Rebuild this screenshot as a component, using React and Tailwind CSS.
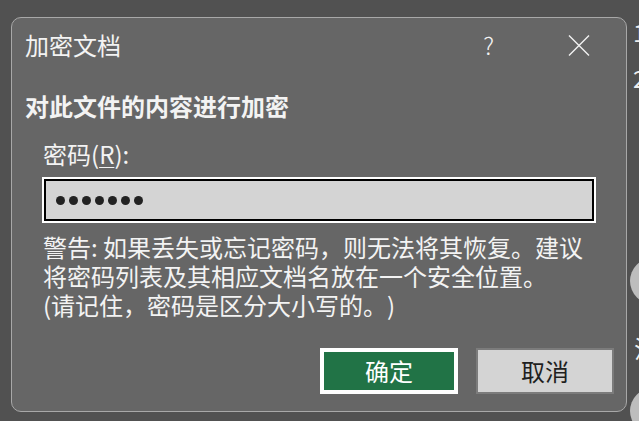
import React from "react";

const cjk = { fontFamily: '"Noto Sans CJK SC", "Noto Sans", sans-serif' };

function CloseIcon() {
  return (
    <svg width="22" height="21" viewBox="0 0 22 21" fill="none">
      <path d="M1 0.5 L21 20.5 M21 0.5 L1 20.5" stroke="#f2f2f2" strokeWidth="1.4" />
    </svg>
  );
}

export default function App() {
  return (
    <div className="relative w-[639px] h-[421px] overflow-hidden bg-[#515151]" style={cjk}>
      {/* glimpses of the window behind the dialog */}
      <div className="absolute left-[633px] top-[20px] text-[24px] leading-[24px] text-[#eeeeee]">1</div>
      <div className="absolute left-[633px] top-[66px] text-[24px] leading-[24px] text-[#eeeeee]">2</div>
      <div className="absolute left-[630px] top-[258px] w-[46px] h-[46px] rounded-full bg-[#bdbdbd]"></div>
      <div className="absolute left-[634px] top-[336px] text-[24px] leading-[24px] text-[#eeeeee]">注</div>
      <div className="absolute left-[630px] top-[388px] w-[46px] h-[46px] rounded-full bg-[#bdbdbd]"></div>

      <div className="pt-[17px] pl-[11px]">
        <div className="w-[616px] h-[395px] rounded-[10px] border border-[#a8a8a8] bg-[#666666] flex flex-col text-[#f3f3f3] [text-spacing-trim:space-all]">
          {/* title bar */}
          <div className="h-[54px] flex items-center pl-[13px]">
            <span className="text-[24px] leading-[32px]">加密文档</span>
            <span className="ml-auto text-[24px] leading-[32px] font-light mr-[74px]">?</span>
            <span className="mr-[36px] mt-[1px]">
              <CloseIcon />
            </span>
          </div>

          <div className="mt-[18px] pl-[13px] text-[24px] leading-[32px] font-bold">
            对此文件的内容进行加密
          </div>

          <div className="mt-[16px] pl-[31px] text-[24px] leading-[32px]">
            密码(<span className="underline underline-offset-[3px] decoration-1">R</span>):
          </div>

          <div className="mt-[7px] ml-[30px] w-[554px] h-[46px] border-2 border-white">
            <div className="h-full border-2 border-black bg-[#d4d4d4] flex items-center gap-[4px] pl-[10px] pt-[1px]">
              {[0, 1, 2, 3, 4, 5, 6].map((i) => (
                <span key={i} className="w-[9px] h-[9px] rounded-full bg-[#222222]"></span>
              ))}
            </div>
          </div>

          <div className="mt-[9px] pl-[31px] text-[24px] leading-[29px]">
            <div>警告: 如果丢失或忘记密码，则无法将其恢复。建议</div>
            <div>将密码列表及其相应文档名放在一个安全位置。</div>
            <div>(请记住，密码是区分大小写的。)</div>
          </div>

          <div className="mt-[29px] flex justify-end gap-[18px] pr-[12px]">
            <button className="w-[138px] h-[46px] border-4 border-white bg-[#217346] text-white text-[24px] leading-none">
              确定
            </button>
            <button className="w-[138px] h-[46px] border-2 border-[#7c7c7c] bg-[#d4d4d4] text-[#1f1f1f] text-[24px] leading-none">
              取消
            </button>
          </div>
        </div>
      </div>
    </div>
  );
}
